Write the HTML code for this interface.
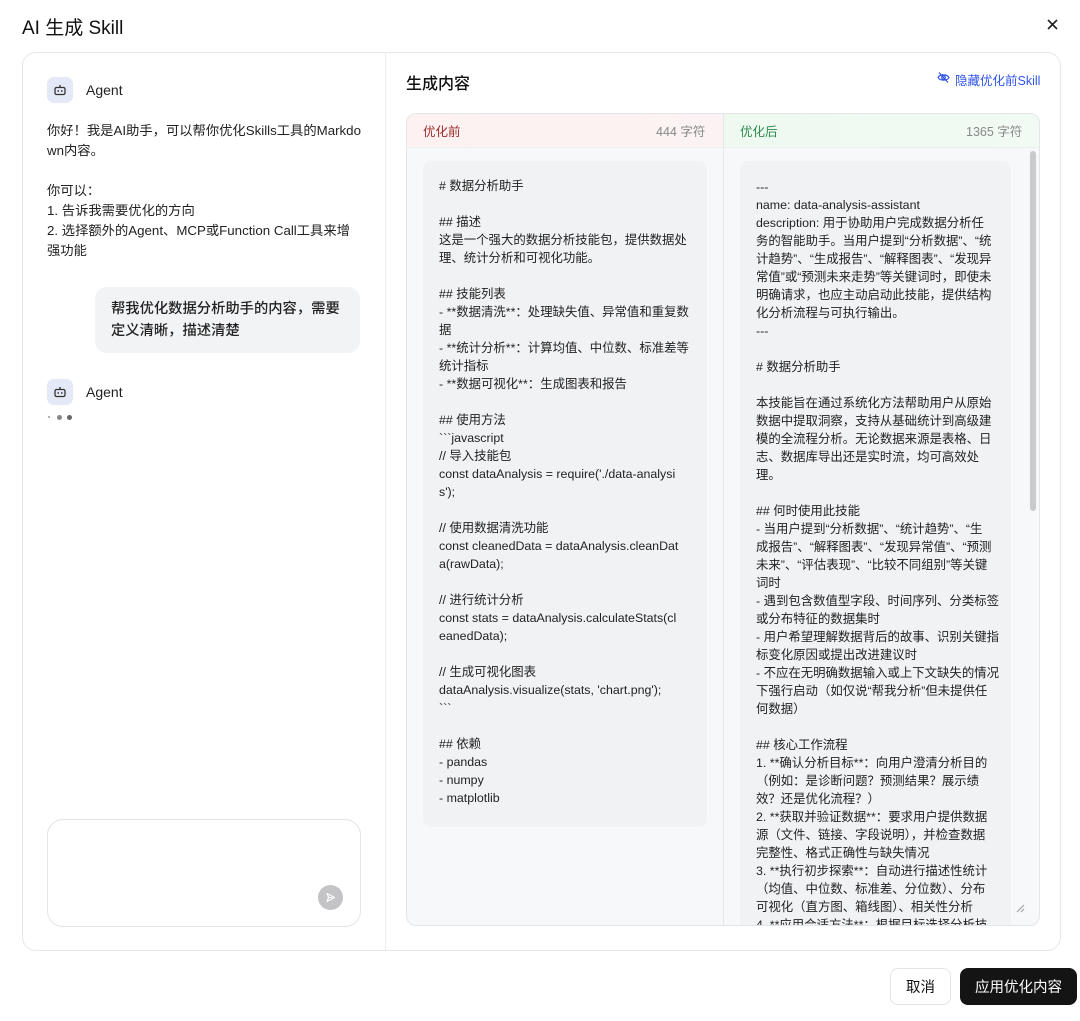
<!DOCTYPE html>
<html><head><meta charset="utf-8"><style>
*{margin:0;padding:0;box-sizing:border-box}
body{width:1080px;height:1021px;background:#fff;font-family:"Liberation Sans","Noto Sans CJK SC",sans-serif;color:#1f2329;position:relative;overflow:hidden}
.abs{position:absolute}
.title{left:22px;top:13px;font-size:19px;font-weight:400;color:#111}
.card{left:22px;top:52px;width:1039px;height:899px;border:1px solid #e6e7ea;border-radius:14px}
.div{left:385px;top:53px;width:1px;height:897px;background:#ececee}
.av{width:26px;height:26px;border-radius:7px;background:#e4e9f7}
.agent{font-size:14px;color:#222}
.msg{left:47px;top:121px;font-size:13.3px;line-height:20px;color:#222;white-space:pre}
.bubble{left:95px;top:287px;width:265px;height:66px;background:#f2f3f5;border-radius:12px;padding:11px 16px;font-size:14.3px;line-height:22px;font-weight:500;color:#222}
.input{left:47px;top:819px;width:314px;height:108px;border:1px solid #e3e4e7;border-radius:16px}
.cmp{left:406px;top:113px;width:634px;height:813px;border:1px solid #e4e5e8;border-radius:10px;background:#f7f8f9;overflow:hidden}
.code{font-size:12.4px;line-height:18px;color:#222;white-space:pre;padding:16px 16px;background:#f1f2f4;border-radius:8px}
.btn{top:968px;height:37px;border-radius:8px;font-size:14.5px;display:flex;align-items:center;justify-content:center}
</style></head><body>
<div class="abs title">AI 生成 Skill</div>
<svg class="abs" style="left:1046px;top:18px" width="13" height="13" viewBox="0 0 13 13"><path d="M2 2L11 11M11 2L2 11" stroke="#222" stroke-width="1.6"/></svg>
<div class="abs card"></div>
<div class="abs div"></div>

<div class="abs av" style="left:47px;top:77px"></div>
<svg class="abs" style="left:53px;top:83px" width="14" height="14" viewBox="0 0 14 14"><rect x="2" y="4.5" width="10" height="7" rx="1.5" fill="none" stroke="#333" stroke-width="1.3"/><path d="M7 4.5V2" stroke="#333" stroke-width="1.3"/><circle cx="5.2" cy="8" r=".9" fill="#333"/><circle cx="8.8" cy="8" r=".9" fill="#333"/></svg>
<div class="abs agent" style="left:86px;top:82px">Agent</div>
<div class="abs msg">你好！我是AI助手，可以帮你优化Skills工具的Markdo
wn内容。

你可以：
1. 告诉我需要优化的方向
2. 选择额外的Agent、MCP或Function Call工具来增
强功能</div>
<div class="abs bubble">帮我优化数据分析助手的内容，需要<br>定义清晰，描述清楚</div>
<div class="abs av" style="left:47px;top:379px"></div>
<svg class="abs" style="left:53px;top:385px" width="14" height="14" viewBox="0 0 14 14"><rect x="2" y="4.5" width="10" height="7" rx="1.5" fill="none" stroke="#333" stroke-width="1.3"/><path d="M7 4.5V2" stroke="#333" stroke-width="1.3"/><circle cx="5.2" cy="8" r=".9" fill="#333"/><circle cx="8.8" cy="8" r=".9" fill="#333"/></svg>
<div class="abs agent" style="left:86px;top:384px">Agent</div>
<div class="abs" style="left:48px;top:416px;width:2px;height:2px;border-radius:50%;background:#999"></div>
<div class="abs" style="left:57px;top:415px;width:5px;height:5px;border-radius:50%;background:#888"></div>
<div class="abs" style="left:67px;top:415px;width:5px;height:5px;border-radius:50%;background:#666"></div>
<div class="abs input"></div>
<div class="abs" style="left:318px;top:885px;width:25px;height:25px;border-radius:50%;background:#c4c4c6"></div>
<svg class="abs" style="left:323px;top:890px" width="15" height="15" viewBox="0 0 15 15"><path d="M4 3.5L11.5 7.5L4 11.5L5.5 7.5Z M5.5 7.5H9" fill="none" stroke="#fff" stroke-width="1.1" stroke-linejoin="round"/></svg>

<div class="abs" style="left:406px;top:70px;font-size:16px;font-weight:500;color:#111">生成内容</div>
<svg class="abs" style="left:937px;top:71px" width="13" height="13" viewBox="0 0 13 13"><path d="M1 6.5C3 3 10 3 12 6.5C10 10 3 10 1 6.5Z" fill="none" stroke="#2f54eb" stroke-width="1.2"/><circle cx="6.5" cy="6.5" r="1.8" fill="none" stroke="#2f54eb" stroke-width="1.2"/><path d="M2 1.5L11 11.5" stroke="#2f54eb" stroke-width="1.2"/></svg>
<div class="abs" style="left:955px;top:70px;font-size:12.5px;color:#2f54eb">隐藏优化前Skill</div>

<div class="abs cmp">
 <div class="abs" style="left:0;top:0;width:316px;height:34px;background:linear-gradient(90deg,#fdf1f1,#fbf3f3);border-bottom:1px solid #eceef0"></div>
 <div class="abs" style="left:316px;top:0;width:318px;height:34px;background:linear-gradient(90deg,#eef9f0,#f1faf3);border-bottom:1px solid #eceef0"></div>
 <div class="abs" style="left:316px;top:0;width:1px;height:813px;background:#e6e7ea"></div>
 <div class="abs" style="left:16px;top:7px;font-size:12.5px;color:#a12b2b">优化前</div>
 <div class="abs" style="left:249px;top:7px;font-size:12.5px;color:#888">444 字符</div>
 <div class="abs" style="left:333px;top:7px;font-size:12.5px;color:#2e8a4e">优化后</div>
 <div class="abs" style="left:559px;top:7px;font-size:12.5px;color:#888">1365 字符</div>
 <div class="abs code" style="left:16px;top:47px;width:284px;height:666px"># 数据分析助手

## 描述
这是一个强大的数据分析技能包，提供数据处
理、统计分析和可视化功能。

## 技能列表
- **数据清洗**：处理缺失值、异常值和重复数
据
- **统计分析**：计算均值、中位数、标准差等
统计指标
- **数据可视化**：生成图表和报告

## 使用方法
&#96;&#96;&#96;javascript
// 导入技能包
const dataAnalysis = require('./data-analysi
s');

// 使用数据清洗功能
const cleanedData = dataAnalysis.cleanDat
a(rawData);

// 进行统计分析
const stats = dataAnalysis.calculateStats(cl
eanedData);

// 生成可视化图表
dataAnalysis.visualize(stats, 'chart.png');
&#96;&#96;&#96;

## 依赖
- pandas
- numpy
- matplotlib</div>
 <div class="abs code" style="left:333px;top:47px;width:271px;height:800px;padding-top:17px">---
name: data-analysis-assistant
description: 用于协助用户完成数据分析任
务的智能助手。当用户提到“分析数据”、“统
计趋势”、“生成报告”、“解释图表”、“发现异
常值”或“预测未来走势”等关键词时，即使未
明确请求，也应主动启动此技能，提供结构
化分析流程与可执行输出。
---

# 数据分析助手

本技能旨在通过系统化方法帮助用户从原始
数据中提取洞察，支持从基础统计到高级建
模的全流程分析。无论数据来源是表格、日
志、数据库导出还是实时流，均可高效处
理。

## 何时使用此技能
- 当用户提到“分析数据”、“统计趋势”、“生
成报告”、“解释图表”、“发现异常值”、“预测
未来”、“评估表现”、“比较不同组别”等关键
词时
- 遇到包含数值型字段、时间序列、分类标签
或分布特征的数据集时
- 用户希望理解数据背后的故事、识别关键指
标变化原因或提出改进建议时
- 不应在无明确数据输入或上下文缺失的情况
下强行启动（如仅说“帮我分析”但未提供任
何数据）

## 核心工作流程
1. **确认分析目标**：向用户澄清分析目的
（例如：是诊断问题？预测结果？展示绩
效？还是优化流程？）
2. **获取并验证数据**：要求用户提供数据
源（文件、链接、字段说明），并检查数据
完整性、格式正确性与缺失情况
3. **执行初步探索**：自动进行描述性统计
（均值、中位数、标准差、分位数）、分布
可视化（直方图、箱线图）、相关性分析
4. **应用合适方法**：根据目标选择分析技</div>
 <div class="abs" style="left:623px;top:37px;width:6px;height:360px;border-radius:3px;background:#c9cacc"></div>
 <svg class="abs" style="left:608px;top:789px" width="10" height="10" viewBox="0 0 10 10"><path d="M2 9L9 2M6 9L9 6" stroke="#999" stroke-width="1"/></svg>
</div>

<div class="abs btn" style="left:890px;width:61px;border:1px solid #e3e4e7;color:#111;background:#fff">取消</div>
<div class="abs btn" style="left:960px;width:117px;background:#141414;color:#fff">应用优化内容</div>
</body></html>
